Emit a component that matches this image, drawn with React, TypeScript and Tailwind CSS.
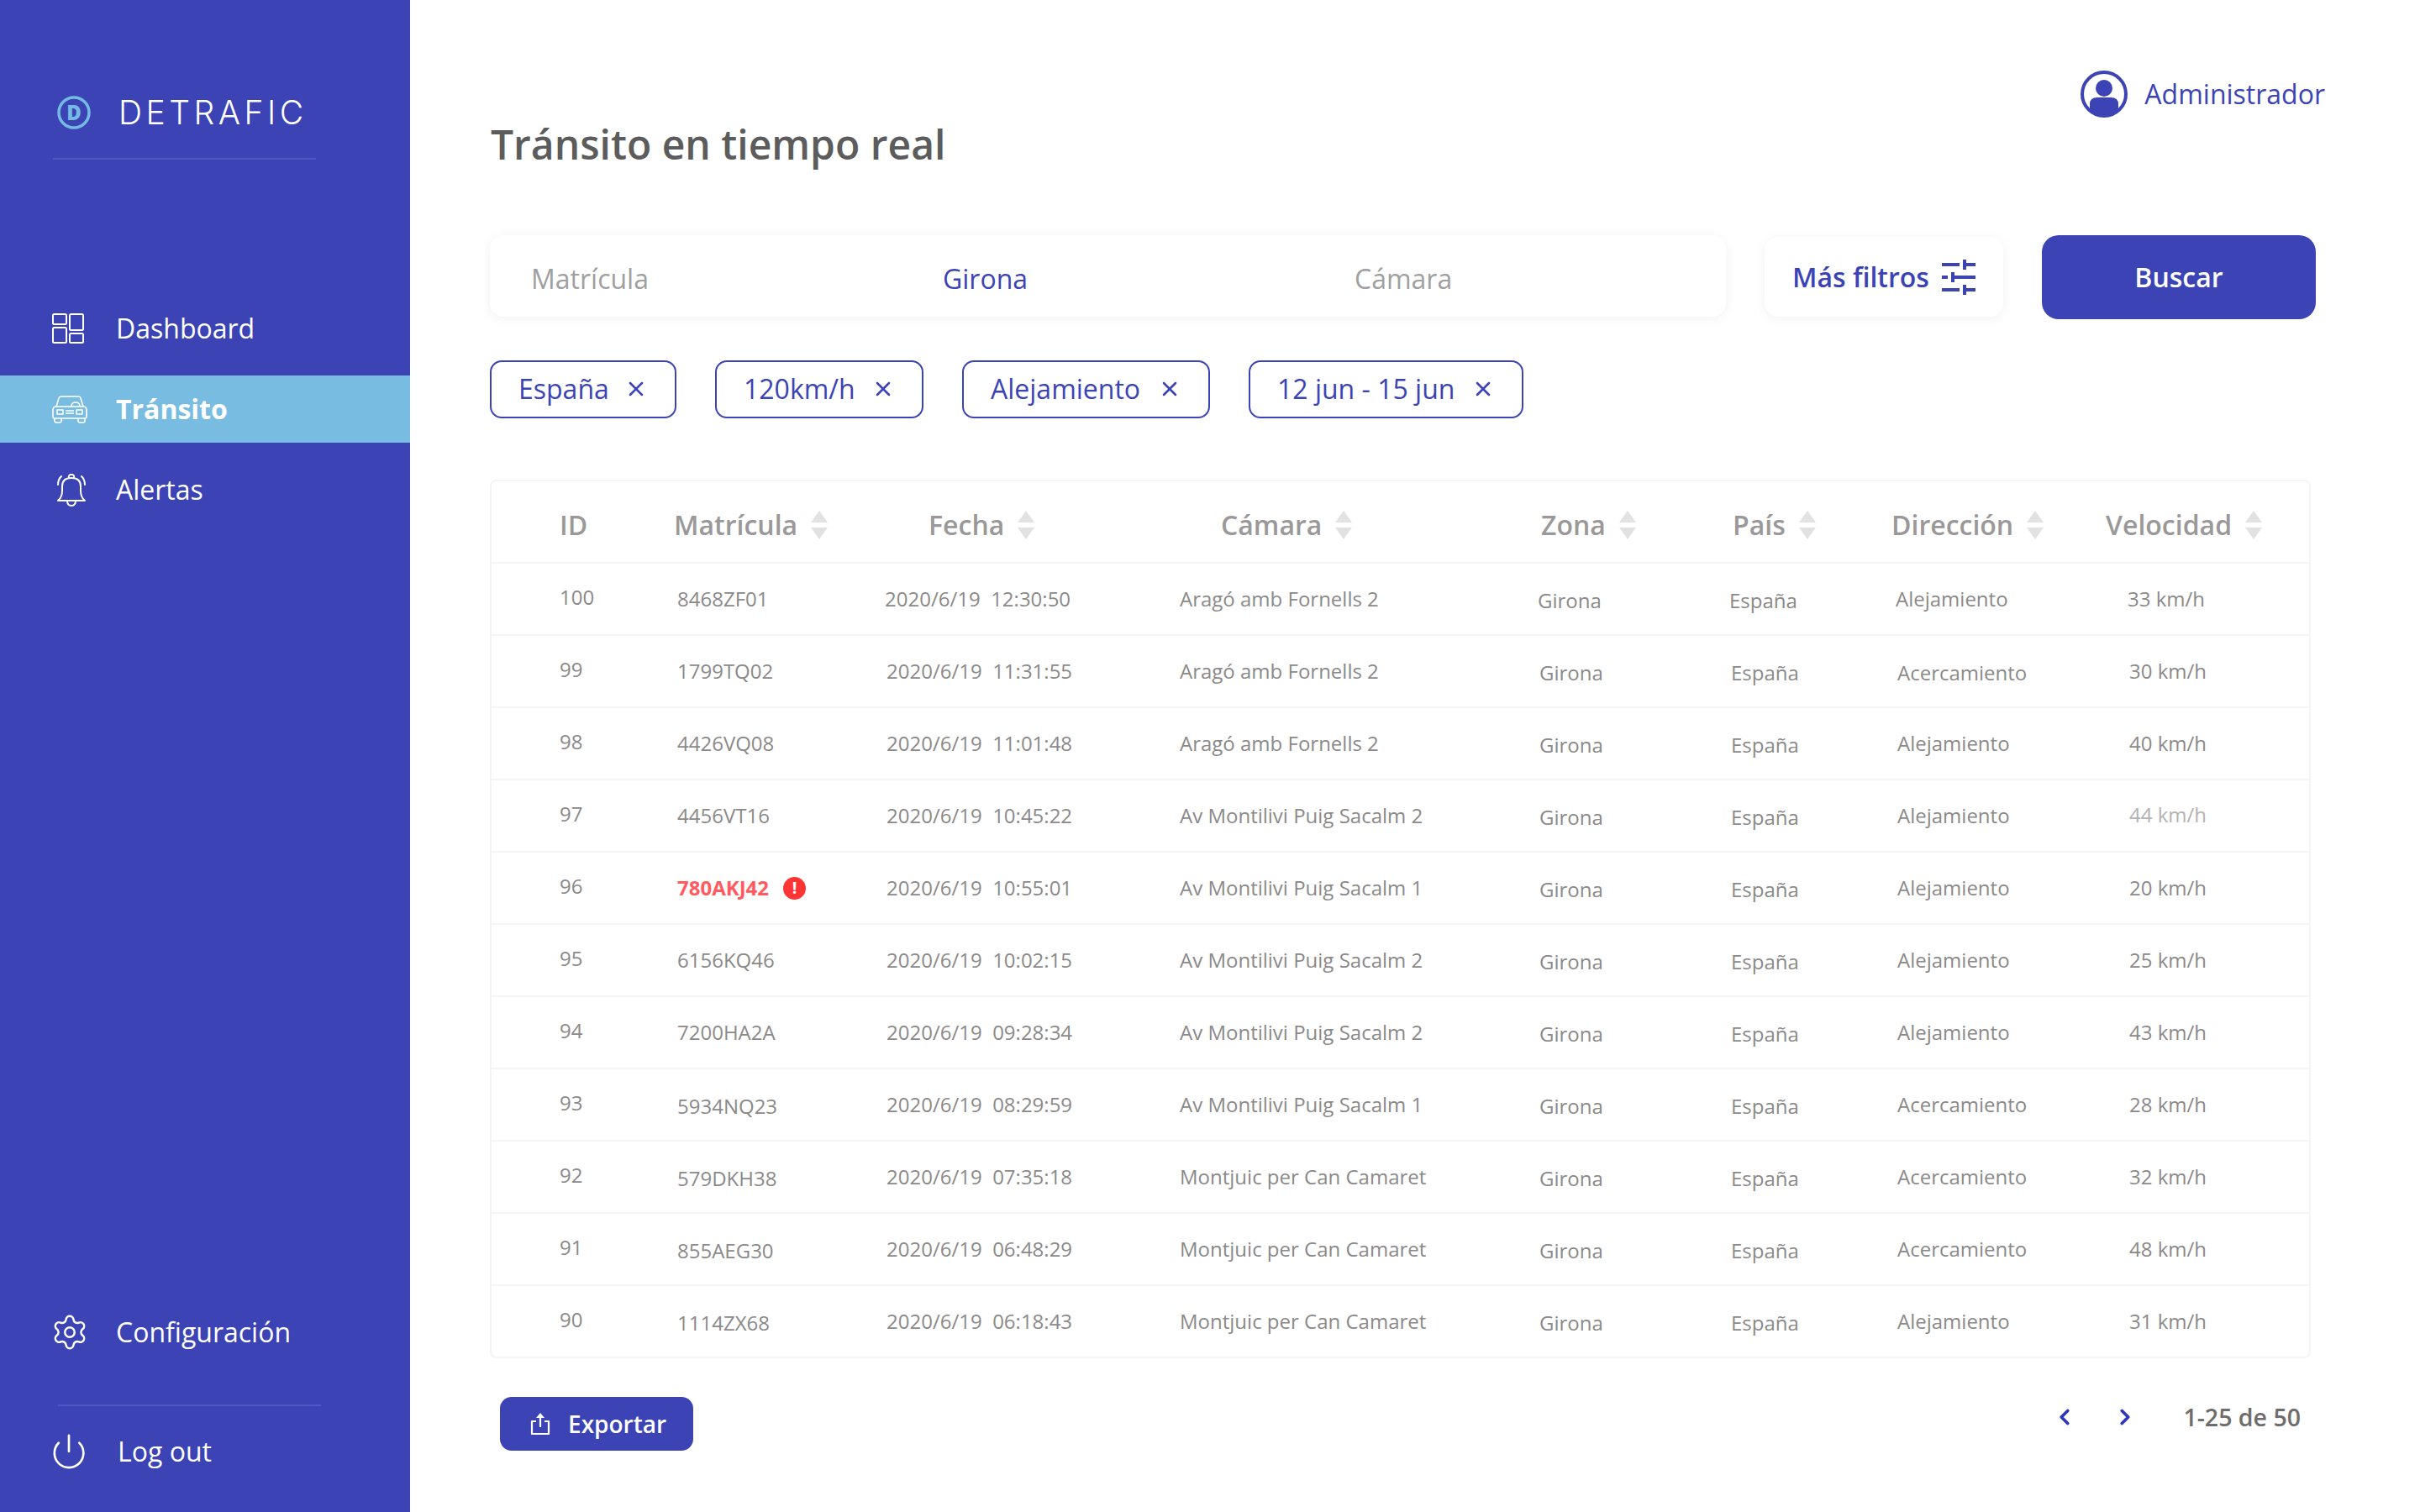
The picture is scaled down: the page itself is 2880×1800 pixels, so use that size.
import { ChevronLeft, ChevronRight, Power, Settings, X } from 'lucide-react'

const INDIGO = '#3b43b5'

const ROWS = [
  { id: '100', plate: '8468ZF01', date: '2020/6/19  12:30:50', cam: 'Aragó amb Fornells 2', dir: 'Alejamiento', vel: '33 km/h', first: true },
  { id: '99', plate: '1799TQ02', date: '2020/6/19  11:31:55', cam: 'Aragó amb Fornells 2', dir: 'Acercamiento', vel: '30 km/h', dirLow: true },
  { id: '98', plate: '4426VQ08', date: '2020/6/19  11:01:48', cam: 'Aragó amb Fornells 2', dir: 'Alejamiento', vel: '40 km/h' },
  { id: '97', plate: '4456VT16', date: '2020/6/19  10:45:22', cam: 'Av Montilivi Puig Sacalm 2', dir: 'Alejamiento', vel: '44 km/h', faint: true },
  { id: '96', plate: '780AKJ42', date: '2020/6/19  10:55:01', cam: 'Av Montilivi Puig Sacalm 1', dir: 'Alejamiento', vel: '20 km/h', alert: true },
  { id: '95', plate: '6156KQ46', date: '2020/6/19  10:02:15', cam: 'Av Montilivi Puig Sacalm 2', dir: 'Alejamiento', vel: '25 km/h' },
  { id: '94', plate: '7200HA2A', date: '2020/6/19  09:28:34', cam: 'Av Montilivi Puig Sacalm 2', dir: 'Alejamiento', vel: '43 km/h' },
  { id: '93', plate: '5934NQ23', date: '2020/6/19  08:29:59', cam: 'Av Montilivi Puig Sacalm 1', dir: 'Acercamiento', vel: '28 km/h', plateLow: true },
  { id: '92', plate: '579DKH38', date: '2020/6/19  07:35:18', cam: 'Montjuic per Can Camaret', dir: 'Acercamiento', vel: '32 km/h', plateLow: true },
  { id: '91', plate: '855AEG30', date: '2020/6/19  06:48:29', cam: 'Montjuic per Can Camaret', dir: 'Acercamiento', vel: '48 km/h', plateLow: true },
  { id: '90', plate: '1114ZX68', date: '2020/6/19  06:18:43', cam: 'Montjuic per Can Camaret', dir: 'Alejamiento', vel: '31 km/h', plateLow: true },
]

const GRID = 'grid grid-cols-[136px_251px_350px_427px_228px_193px_253px_1fr] pl-[81px] items-center'

function DashIcon() {
  return (
    <svg width="38" height="36" viewBox="0 0 38 36" fill="none" stroke="white" strokeWidth="2">
      <rect x="1" y="1" width="16" height="12" rx="1.5" />
      <rect x="21" y="1" width="16" height="19" rx="1.5" />
      <rect x="1" y="17" width="16" height="18" rx="1.5" />
      <rect x="21" y="24" width="16" height="11" rx="1.5" />
    </svg>
  )
}

function CarIcon() {
  return (
    <svg width="42" height="33" viewBox="0 0 42 33" fill="none" stroke="white" strokeWidth="1.6" strokeLinejoin="round">
      <path d="M5 13 8 3q.5-2 3-2h20q2.500 0 3 2l3 10" />
      <path d="M23 13q0-5 5-5t5 5" />
      <path d="M1 17q0-4 4-4h32q4 0 4 4v8q0 2-2 2H3q-2 0-2-2z" />
      <path d="M3 27v3q0 2 2 2h4q2 0 2-2v-3M31 27v3q0 2 2 2h4q2 0 2-2v-3" />
      <rect x="6" y="17" width="7" height="5" />
      <rect x="29" y="17" width="7" height="5" />
      <path d="M16 18h10M16 21h10" />
    </svg>
  )
}

function BellIcon() {
  return (
    <svg width="36" height="40" viewBox="0 0 36 40" fill="none" stroke="white" strokeWidth="2" strokeLinejoin="round" strokeLinecap="round" className="ml-[5px]">
      <path d="M2 33q5-4 5-12v-5q0-10 11-10t11 10v5q0 8 5 12z" />
      <path d="M15 6q-1-4 3-4t3 4" />
      <path d="M13 33q0 6 5 6t5-6" />
      <path d="M6 4Q2 8 2 14M30 4q4 4 4 10" />
    </svg>
  )
}

function ExportIcon() {
  return (
    <svg width="24" height="28" viewBox="0 0 24 28" fill="none" stroke="white" strokeWidth="2.200">
      <path d="M7 11H2v15h20V11h-5" strokeLinejoin="round" />
      <path d="M12 18V4" />
      <path d="M7 7l5-6 5 6z" fill="white" stroke="none" />
    </svg>
  )
}

function SlidersIcon() {
  return (
    <svg width="40" height="42" viewBox="0 0 40 42" fill={INDIGO}>
      <rect x="0" y="4" width="21" height="4" />
      <rect x="25" y="0" width="4" height="12" />
      <rect x="29" y="4" width="11" height="4" />
      <rect x="0" y="19" width="7" height="4" />
      <rect x="11" y="15" width="4" height="12" />
      <rect x="15" y="19" width="25" height="4" />
      <rect x="0" y="34" width="21" height="4" />
      <rect x="25" y="30" width="4" height="12" />
      <rect x="29" y="34" width="11" height="4" />
    </svg>
  )
}

function UserIcon() {
  return (
    <svg width="56" height="56" viewBox="0 0 56 56">
      <circle cx="28" cy="28" r="26" fill="none" stroke={INDIGO} strokeWidth="4" />
      <circle cx="28" cy="21" r="10" fill={INDIGO} />
      <path d="M11 46v-6q0-8 9-8h16q9 0 9 8v6q-7 7-17 7t-17-7z" fill={INDIGO} />
    </svg>
  )
}

function SortArrows() {
  return (
    <svg width="22" height="34" viewBox="0 0 22 34" fill="#e2e2e2" className="ml-[15px]">
      <path d="M11 0l10 14H1z" />
      <path d="M11 34 1 20h20z" />
    </svg>
  )
}

function Head({ label, sort = true, className = '' }: { label: string; sort?: boolean; className?: string }) {
  return (
    <div className={`flex items-center pt-[7px] text-[32px] font-semibold text-[#9a9898] ${className}`}>
      {label}
      {sort && <SortArrows />}
    </div>
  )
}

function NavItem({ icon, label, active }: { icon: React.ReactNode; label: string; active?: boolean }) {
  return (
    <div className={`flex items-center h-[80px] pl-[62px] text-[32px] text-white ${active ? 'bg-[#79bce1] font-bold' : ''}`}>
      <div className="w-[76px] flex items-center">{icon}</div>
      {label}
    </div>
  )
}

function Chip({ label, className }: { label: string; className: string }) {
  return (
    <div className={`flex items-center justify-between h-[69px] border-2 border-[#3b43b5] rounded-[14px] pl-[32px] pr-[32px] pb-[2px] text-[32px] text-[#3b43b5] ${className}`}>
      {label}
      <X size={28} strokeWidth={2.200} />
    </div>
  )
}

export default function App() {
  return (
    <div className="flex w-[2880px] h-[1800px] bg-white font-['Open_Sans',sans-serif]">
      <aside className="w-[488px] shrink-0 bg-[#3b43b5] flex flex-col">
        <div className="flex items-center gap-[33px] ml-[68px] mt-[114px] h-[40px]">
          <svg width="40" height="40" viewBox="0 0 40 40">
            <circle cx="20" cy="20" r="18" fill="none" stroke="#74bbe3" strokeWidth="3.500" />
            <text x="20" y="28.500" textAnchor="middle" fontSize="24" fontWeight="800" fill="#74bbe3" fontFamily="Open Sans">D</text>
          </svg>
          <span className="font-['Inter',sans-serif] font-light text-[39px] tracking-[4.500px] text-white">DETRAFIC</span>
        </div>
        <div className="h-[2px] w-[313px] ml-[63px] mt-[34px] bg-[#4e57c2]" />
        <nav className="mt-[161px] flex flex-col gap-[16px]">
          <NavItem icon={<DashIcon />} label="Dashboard" />
          <NavItem icon={<CarIcon />} label="Tránsito" active />
          <NavItem icon={<BellIcon />} label="Alertas" />
        </nav>
        <div className="mt-auto flex flex-col">
          <div className="flex items-center pl-[60px] text-[32px] text-white">
            <div className="w-[78px]"><Settings size={46} strokeWidth={1.300} /></div>
            Configuración
          </div>
          <div className="h-[2px] w-[313px] ml-[69px] mt-[62px] bg-[#4e57c2]" />
          <div className="flex items-center pl-[59px] mt-[30px] mb-[48px] text-[32px] text-white">
            <div className="w-[81px]"><Power size={46} strokeWidth={1.400} /></div>
            Log out
          </div>
        </div>
      </aside>

      <main className="flex-1 pl-[95px] flex flex-col">
        <div className="flex items-start justify-between pr-[113px]">
          <h1 className="mt-[138px] ml-[1px] text-[48px] leading-[68px] font-semibold text-[#5c5c5c]">Tránsito en tiempo real</h1>
          <div className="mt-[84px] flex items-center gap-[20px] text-[32px] text-[#3b43b5]">
            <UserIcon />
            Administrador
          </div>
        </div>

        <div className="flex items-start mt-[74px]">
          <div className="flex items-center w-[1471px] h-[97px] rounded-[16px] bg-white shadow-[0_2px_14px_rgba(0,0,0,0.06)] pl-[49px] pt-[6px] text-[32px]">
            <div className="w-[490px] text-[#a0a0a0]">Matrícula</div>
            <div className="w-[490px] text-[#3b43b5]">Girona</div>
            <div className="text-[#a0a0a0]">Cámara</div>
          </div>
          <div className="flex items-center justify-between ml-[46px] mt-[2px] w-[284px] h-[95px] rounded-[16px] bg-white shadow-[0_2px_14px_rgba(0,0,0,0.06)] px-[33px] text-[32px] font-semibold text-[#3b43b5]">
            Más filtros
            <SlidersIcon />
          </div>
          <div className="flex items-center justify-center ml-[46px] w-[326px] h-[100px] rounded-[20px] bg-[#3b43b5] text-[32px] font-semibold text-white">
            Buscar
          </div>
        </div>

        <div className="flex mt-[49px] gap-[46px]">
          <Chip label="España" className="w-[222px]" />
          <Chip label="120km/h" className="w-[248px]" />
          <Chip label="Alejamiento" className="w-[295px]" />
          <Chip label="12 jun - 15 jun" className="w-[327px]" />
        </div>

        <div className="mt-[73px] w-[2167px] border-2 border-[#f4f4f4] rounded-[8px]">
          <div className={`${GRID} h-[98px] border-b-2 border-[#f4f4f4]`}>
            <Head label="ID" sort={false} />
            <Head label="Matrícula" />
            <Head label="Fecha" className="pl-[52px]" />
            <Head label="Cámara" className="pl-[50px]" />
            <Head label="Zona" className="pl-[4px]" />
            <Head label="País" className="pl-[4px]" />
            <Head label="Dirección" />
            <Head label="Velocidad" className="pl-[2px]" />
          </div>
          {ROWS.map((r, i) => (
            <div key={r.id} className={`${GRID} text-[24px] text-[#8b8989] ${i < ROWS.length - 1 ? 'h-[86px] border-b-2 border-[#f4f4f4]' : 'h-[84px]'}`}>
              <div className="pb-[4px]">{r.id}</div>
              {r.alert ? (
                <div className="flex items-center gap-[17px] pl-[4px] font-bold text-[#ff5a5f]">
                  {r.plate}
                  <span className="flex items-center justify-center w-[27px] h-[27px] rounded-full bg-[#ff3535] text-white text-[20px] leading-none">!</span>
                </div>
              ) : (
                <div className={`pl-[4px] ${r.plateLow ? 'pt-[3px]' : ''}`}>{r.plate}</div>
              )}
              <div className={`whitespace-pre pl-[2px] ${r.first ? '-ml-[2px]' : ''}`}>{r.date}</div>
              <div className="pl-[1px]">{r.cam}</div>
              <div className={`pt-[3px] pl-[2px] ${r.first ? '-ml-[2px]' : ''}`}>Girona</div>
              <div className={`pt-[3px] pl-[2px] ${r.first ? '-ml-[2px]' : ''}`}>España</div>
              <div className={`pl-[7px] ${r.first ? '-ml-[2px]' : ''} ${r.dirLow ? 'pt-[4px]' : ''}`}>{r.dir}</div>
              <div className={`pl-[30px] ${r.first ? '-ml-[2px]' : ''} ${r.faint ? 'text-[#b4b2b2] pb-[2px]' : ''}`}>{r.vel}</div>
            </div>
          ))}
        </div>

        <div className="flex items-start justify-between mt-[46px] w-[2165px]">
          <div className="flex items-center ml-[12px] w-[230px] h-[64px] rounded-[14px] bg-[#3b43b5] pl-[36px] gap-[21px] text-[28px] font-semibold text-white">
            <ExportIcon />
            Exportar
          </div>
          <div className="flex items-center pr-[10px] h-[48px] text-[#6f6c6c] text-[28.500px] font-semibold">
            <ChevronLeft size={30} strokeWidth={3} className="text-[#2f37b8]" />
            <ChevronRight size={30} strokeWidth={3} className="text-[#2f37b8] ml-[42px] mr-[54px]" />
            1-25 de 50
          </div>
        </div>
      </main>
    </div>
  )
}
